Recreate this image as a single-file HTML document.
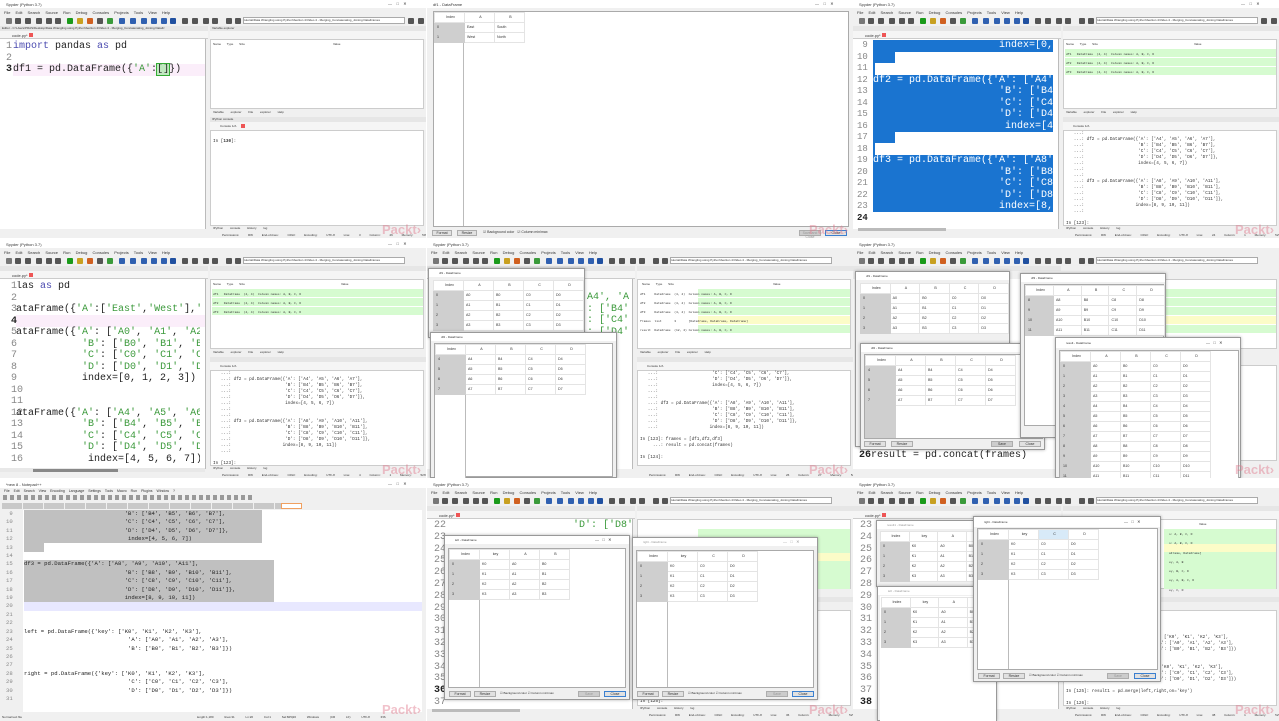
<!DOCTYPE html>
<html><head><meta charset="utf-8">
<style>
*{margin:0;padding:0;box-sizing:border-box}
body{width:1279px;height:721px;background:#fff;position:relative;overflow:hidden;font-family:"Liberation Sans",sans-serif}
.T{position:absolute;width:426px;height:238px;overflow:hidden;background:#f0f0f0}
.a{position:absolute}
.clip{overflow:hidden}
.s{font:4px/5px "Liberation Sans",sans-serif;color:#333;white-space:nowrap}
.c{font:10px/11.5px "Liberation Mono",monospace;white-space:pre;color:#222}
.k{color:#4b4bb0}.g{color:#3c9a3c}
.m{font:4.3px/6px "Liberation Mono",monospace;white-space:pre;color:#333}
.tt{left:0;top:0;width:426px;height:8px;background:#fff}
.mn{left:4px;top:10px;word-spacing:4px}
.tb{left:0;top:16px;width:426px;height:10px}
.ic{position:absolute;top:18px;width:6px;height:6px;background:#555;border-radius:1px}
.eh{left:0;top:26px;width:208px;height:5px;background:#e6e6e6}
.et{left:0;top:31px;width:208px;height:8px;background:#f5f5f5;border-bottom:1px solid #ccc}
.ed{left:0;top:39px;width:206px;height:190px;background:#fff;border-right:1px solid #bbb}
.vh0{left:210px;top:26px;width:216px;height:5px;background:#e6e6e6}
.vt{left:210px;top:31px;width:216px;height:8px;background:#f5f5f5}
.vp{left:210px;top:39px;width:214px;height:70px;background:#fff;border:1px solid #ccc}
.pt{left:210px;top:109px;width:216px;height:7px;background:#f0f0f0}
.ch{left:210px;top:117px;width:216px;height:5px;background:#e6e6e6}
.ct{left:210px;top:122px;width:216px;height:8px;background:#f5f5f5}
.cb{left:210px;top:130px;width:214px;height:96px;background:#fff;border:1px solid #ccc}
.bt{left:210px;top:226px;width:216px;height:6px;background:#f0f0f0}
.st{left:0;top:232px;width:426px;height:6px;background:#f0f0f0}
.gr{background:#d6fbd0}
.pk{position:absolute;left:382px;top:222px;font:bold 13px "Liberation Sans",sans-serif;color:rgba(225,120,140,.45)}
.w{position:absolute;background:#f0f0f0;border:1px solid #999;box-shadow:0 0 3px rgba(0,0,0,.3)}
.w .wt{position:absolute;left:0;top:0;right:0;height:8px;background:#fff}
.w .in{position:absolute;left:3px;top:10px;right:3px;bottom:10px;background:#fff;border:1px solid #aaa}
table{border-collapse:collapse}
td{font:3.6px/9px "Liberation Sans",sans-serif;color:#333;border:1px solid #e4e4e4;width:30px;height:9px;padding-left:2px}
td.i{background:#cfcfcf;border-color:#cfcfcf}
tr.h td{background:#fff;text-align:center;height:9px}
.btn{position:absolute;bottom:2px;height:6px;width:22px;background:#e1e1e1;border:1px solid #adadad;font:3.5px/4px "Liberation Sans";text-align:center;color:#333}
</style></head><body>

<!-- ============ TILE 1 ============ -->
<div class="T" style="left:0;top:0">
<div class="a tt"><span class="a s" style="left:6px;top:2px">Spyder (Python 3.7)</span><span class="a s" style="left:388px;top:1px">—&nbsp;&nbsp;&nbsp;&nbsp;□&nbsp;&nbsp;&nbsp;&nbsp;✕</span></div>
<div class="a s mn">File Edit Search Source Run Debug Consoles Projects Tools View Help</div>
<div class="a tb"></div>
<span class="ic" style="left:6px;background:#777"></span><span class="ic" style="left:15px"></span><span class="ic" style="left:25px"></span><span class="ic" style="left:36px"></span><span class="ic" style="left:46px"></span><span class="ic" style="left:55px"></span><span class="ic" style="left:67px;background:#1a9a1a"></span><span class="ic" style="left:77px;background:#c8a020"></span><span class="ic" style="left:87px;background:#d06020"></span><span class="ic" style="left:97px"></span><span class="ic" style="left:107px;background:#3a9a3a"></span><span class="ic" style="left:119px;background:#3060b0"></span><span class="ic" style="left:130px;background:#3060b0"></span><span class="ic" style="left:141px;background:#3060b0"></span><span class="ic" style="left:151px;background:#3060b0"></span><span class="ic" style="left:161px;background:#3060b0"></span><span class="ic" style="left:170px;background:#2050a0"></span><span class="ic" style="left:182px"></span><span class="ic" style="left:192px"></span><span class="ic" style="left:203px"></span><span class="ic" style="left:212px"></span><span class="ic" style="left:226px"></span><span class="ic" style="left:235px"></span>
<div class="a s" style="left:243px;top:17px;width:162px;height:7px;background:#fff;border:1px solid #aaa;font-size:3px;overflow:hidden">tutorial\Data Wrangling using Python\Section 4\Video 4 - Merging_Concatenating_Joining DataFrames</div>
<span class="ic" style="left:408px"></span><span class="ic" style="left:418px"></span>
<div class="a eh"><span class="a s" style="left:2px;top:0;font-size:3px">Editor - C:\Users\PRAS\Desktop\Data Wrangling using Python\Section 4\Video 4 - Merging_Concatenating_Joining DataFr</span></div>
<div class="a et"><span class="a s" style="left:12px;top:2px">code.py*</span><span class="a" style="left:29px;top:2px;width:4px;height:4px;background:#e55"></span></div>
<div class="a ed"></div>
<div class="a" style="left:13px;top:64px;width:192px;height:12px;background:#fbeefa"></div>
<div class="a c" style="left:6px;top:41px;color:#888">1
2
<b style="color:#222">3</b></div>
<div class="a c" style="left:13px;top:41px"><span class="k">import</span> pandas <span class="k">as</span> pd

df1 = pd.DataFrame({<span class="g">'A'</span>:<span style="background:#bfe8bf;outline:1px solid #3a3">[]</span>})</div>
<div class="a vh0"><span class="a s" style="left:2px;top:0;font-size:3px">Variable explorer</span></div>
<div class="a vt"></div>
<div class="a vp"><span class="a s" style="left:2px;top:2px;font-size:3px;word-spacing:5px">Name Type Size</span><span class="a s" style="left:122px;top:2px;font-size:3px">Value</span></div>
<div class="a pt"><span class="a s" style="left:3px;top:1px;font-size:3px;word-spacing:6px">Variable&nbsp;explorer File&nbsp;explorer Help</span></div>
<div class="a ch"><span class="a s" style="left:2px;top:0;font-size:3px">IPython console</span></div>
<div class="a ct"><span class="a s" style="left:10px;top:2px;font-size:3px">Console 1/A</span><span class="a" style="left:31px;top:2px;width:4px;height:4px;background:#e55"></span></div>
<div class="a cb"><div class="a m" style="left:2px;top:8px">In [<b>130</b>]:</div></div>
<div class="a bt"><span class="a s" style="left:3px;top:0;font-size:3px;word-spacing:6px">IPython&nbsp;console History&nbsp;log</span></div>
<div class="a st"><span class="a s" style="left:222px;top:1px;font-size:3px;word-spacing:8px">Permissions:&nbsp;RW End-of-lines:&nbsp;CRLF Encoding:&nbsp;UTF-8 Line:&nbsp;3 Column:&nbsp;26 Memory:&nbsp;50%</span></div>
<div class="pk">Packt›</div>
</div>

<!-- ============ TILE 2 (DataFrame window) ============ -->
<div class="T" style="left:427px;top:0;background:#f0f0f0">
<div class="a tt"><span class="a s" style="left:6px;top:2px">df1 - DataFrame</span><span class="a s" style="left:388px;top:1px">—&nbsp;&nbsp;&nbsp;&nbsp;□&nbsp;&nbsp;&nbsp;&nbsp;✕</span></div>
<div class="a" style="left:6px;top:11px;width:416px;height:216px;background:#fff;border:1px solid #aaa"></div>
<div class="a" style="left:7px;top:12px;width:30px;height:214px;border-right:1px solid #bbb"></div>
<table class="a" style="left:7px;top:12px">
<tr class="h"><td>Index</td><td>A</td><td>B</td></tr>
<tr><td class="i">0</td><td>East</td><td>South</td></tr>
<tr><td class="i">1</td><td>West</td><td>North</td></tr>
</table>
<div class="btn" style="left:5px;bottom:2px;width:20px">Format</div><div class="btn" style="left:30px;width:20px">Resize</div>
<span class="a s" style="left:56px;top:230px;font-size:3.5px">☑ Background color&nbsp;&nbsp;&nbsp;☑ Column min/max</span>
<div class="btn" style="left:372px;background:#ccc;color:#999">Save and Close</div><div class="btn" style="left:398px;border-color:#3b80d0">Close</div>
<div class="pk">Packt›</div>
</div>

<!-- ============ TILE 3 ============ -->
<div class="T" style="left:853px;top:0">
<div class="a tt"><span class="a s" style="left:6px;top:2px">Spyder (Python 3.7)</span><span class="a s" style="left:388px;top:1px">—&nbsp;&nbsp;&nbsp;&nbsp;□&nbsp;&nbsp;&nbsp;&nbsp;✕</span></div>
<div class="a s mn">File Edit Search Source Run Debug Consoles Projects Tools View Help</div>
<span class="ic" style="left:6px;background:#777"></span><span class="ic" style="left:15px"></span><span class="ic" style="left:25px"></span><span class="ic" style="left:36px"></span><span class="ic" style="left:46px"></span><span class="ic" style="left:55px"></span><span class="ic" style="left:67px;background:#1a9a1a"></span><span class="ic" style="left:77px;background:#c8a020"></span><span class="ic" style="left:87px;background:#d06020"></span><span class="ic" style="left:97px"></span><span class="ic" style="left:107px;background:#3a9a3a"></span><span class="ic" style="left:119px;background:#3060b0"></span><span class="ic" style="left:130px;background:#3060b0"></span><span class="ic" style="left:141px;background:#3060b0"></span><span class="ic" style="left:151px;background:#3060b0"></span><span class="ic" style="left:161px;background:#3060b0"></span><span class="ic" style="left:170px;background:#2050a0"></span><span class="ic" style="left:182px"></span><span class="ic" style="left:192px"></span><span class="ic" style="left:203px"></span><span class="ic" style="left:212px"></span><span class="ic" style="left:226px"></span><span class="ic" style="left:235px"></span>
<div class="a s" style="left:243px;top:17px;width:162px;height:7px;background:#fff;border:1px solid #aaa;font-size:3px;overflow:hidden">tutorial\Data Wrangling using Python\Section 4\Video 4 - Merging_Concatenating_Joining DataFrames</div>
<span class="ic" style="left:408px"></span><span class="ic" style="left:418px"></span>
<div class="a eh"></div>
<div class="a et"><span class="a s" style="left:12px;top:2px">code.py*</span><span class="a" style="left:29px;top:2px;width:4px;height:4px;background:#e55"></span></div>
<div class="a ed"></div>
<div class="a" style="left:20px;top:40px;width:180px;height:172px;background:#1a74d0"></div>
<div class="a" style="left:42px;top:52px;width:158px;height:11px;background:#fff"></div>
<div class="a" style="left:22px;top:63px;width:178px;height:12px;background:#fff"></div>
<div class="a" style="left:42px;top:132px;width:158px;height:11px;background:#fff"></div>
<div class="a" style="left:22px;top:143px;width:178px;height:12px;background:#fff"></div>
<div class="a c" style="left:4px;top:40px;color:#888;font-size:9px"> 9
10
11
12
13
14
15
16
17
18
19
20
21
22
23
<b style="color:#222">24</b></div>
<div class="a c clip" style="left:20px;top:40px;width:180px;height:175px;color:#fff">                     index=[0,


df2 = pd.DataFrame({'A': ['A4', 'A
                     'B': ['B4'
                     'C': ['C4'
                     'D': ['D4'
                      index=[4,


df3 = pd.DataFrame({'A': ['A8', 'A
                     'B': ['B8'
                     'C': ['C8'
                     'D': ['D8'
                     index=[8,</div>
<div class="a" style="left:5px;top:228px;width:88px;height:3px;background:#bbb"></div>
<div class="a vh0"></div><div class="a vt"></div>
<div class="a vp"><span class="a s" style="left:2px;top:2px;font-size:3px;word-spacing:5px">Name Type Size</span><span class="a s" style="left:130px;top:2px;font-size:3px">Value</span>
<div class="a gr" style="left:1px;top:9px;width:211px;height:8px"></div><div class="a gr" style="left:1px;top:18px;width:211px;height:8px"></div><div class="a gr" style="left:1px;top:27px;width:211px;height:8px"></div>
<div class="a m" style="left:2px;top:10px;font-size:3px;line-height:9px">df1   DataFrame  (4, 4)  Column names: A, B, C, D
df2   DataFrame  (4, 4)  Column names: A, B, C, D
df3   DataFrame  (4, 4)  Column names: A, B, C, D</div></div>
<div class="a pt"><span class="a s" style="left:3px;top:1px;font-size:3px;word-spacing:6px">Variable&nbsp;explorer File&nbsp;explorer Help</span></div>
<div class="a ch"></div><div class="a ct"><span class="a s" style="left:10px;top:2px;font-size:3px">Console 1/A</span></div>
<div class="a cb"><div class="a m" style="left:2px;top:0">   ...:
   ...: df2 = pd.DataFrame({'A': ['A4', 'A5', 'A6', 'A7'],
   ...:                     'B': ['B4', 'B5', 'B6', 'B7'],
   ...:                     'C': ['C4', 'C5', 'C6', 'C7'],
   ...:                     'D': ['D4', 'D5', 'D6', 'D7']},
   ...:                     index=[4, 5, 6, 7])
   ...:
   ...:
   ...: df3 = pd.DataFrame({'A': ['A8', 'A9', 'A10', 'A11'],
   ...:                     'B': ['B8', 'B9', 'B10', 'B11'],
   ...:                     'C': ['C8', 'C9', 'C10', 'C11'],
   ...:                     'D': ['D8', 'D9', 'D10', 'D11']},
   ...:                    index=[8, 9, 10, 11])
   ...:

In [123]:</div></div>
<div class="a bt"><span class="a s" style="left:3px;top:0;font-size:3px;word-spacing:6px">IPython&nbsp;console History&nbsp;log</span></div>
<div class="a st"><span class="a s" style="left:222px;top:1px;font-size:3px;word-spacing:8px">Permissions:&nbsp;RW End-of-lines:&nbsp;CRLF Encoding:&nbsp;UTF-8 Line:&nbsp;24 Column:&nbsp;1 Memory:&nbsp;52%</span></div>
<div class="pk">Packt›</div>
</div>

<!-- ============ TILE 4 ============ -->
<div class="T" style="left:0;top:240px">
<div class="a tt"><span class="a s" style="left:6px;top:2px">Spyder (Python 3.7)</span><span class="a s" style="left:388px;top:1px">—&nbsp;&nbsp;&nbsp;&nbsp;□&nbsp;&nbsp;&nbsp;&nbsp;✕</span></div>
<div class="a s mn">File Edit Search Source Run Debug Consoles Projects Tools View Help</div>
<span class="ic" style="left:6px;background:#777"></span><span class="ic" style="left:15px"></span><span class="ic" style="left:25px"></span><span class="ic" style="left:36px"></span><span class="ic" style="left:46px"></span><span class="ic" style="left:55px"></span><span class="ic" style="left:67px;background:#1a9a1a"></span><span class="ic" style="left:77px;background:#c8a020"></span><span class="ic" style="left:87px;background:#d06020"></span><span class="ic" style="left:97px"></span><span class="ic" style="left:107px;background:#3a9a3a"></span><span class="ic" style="left:119px;background:#3060b0"></span><span class="ic" style="left:130px;background:#3060b0"></span><span class="ic" style="left:141px;background:#3060b0"></span><span class="ic" style="left:151px;background:#3060b0"></span><span class="ic" style="left:161px;background:#3060b0"></span><span class="ic" style="left:170px;background:#2050a0"></span><span class="ic" style="left:182px"></span><span class="ic" style="left:192px"></span><span class="ic" style="left:203px"></span><span class="ic" style="left:212px"></span><span class="ic" style="left:226px"></span><span class="ic" style="left:235px"></span>
<div class="a s" style="left:243px;top:17px;width:162px;height:7px;background:#fff;border:1px solid #aaa;font-size:3px;overflow:hidden">tutorial\Data Wrangling using Python\Section 4\Video 4 - Merging_Concatenating_Joining DataFrames</div>
<div class="a eh"></div>
<div class="a et"><span class="a s" style="left:12px;top:2px">code.py*</span><span class="a" style="left:29px;top:2px;width:4px;height:4px;background:#e55"></span></div>
<div class="a ed"></div>
<div class="a" style="left:16px;top:75px;width:189px;height:12px;background:#fbeefa"></div>
<div class="a c" style="left:11px;top:41px;color:#888">1
2
3
<b style="color:#222">4</b>
5
6
7
8
9
10
11
12
13
14
15
16</div>
<div class="a c clip" style="left:16px;top:41px;width:184px;height:186px"><span>las <span class="k">as</span> pd</span>

ataFrame({<span class="g">'A'</span>:[<span class="g">'East'</span>,<span class="g">'West'</span>],<span class="g">'B'</span>:[

ataFrame({<span class="g">'A'</span>: [<span class="g">'A0'</span>, <span class="g">'A1'</span>, <span class="g">'A2'</span>, <span class="g">'</span>
           <span class="g">'B'</span>: [<span class="g">'B0'</span>, <span class="g">'B1'</span>, <span class="g">'B2</span>
           <span class="g">'C'</span>: [<span class="g">'C0'</span>, <span class="g">'C1'</span>, <span class="g">'C2</span>
           <span class="g">'D'</span>: [<span class="g">'D0'</span>, <span class="g">'D1'</span>, <span class="g">'D2</span>
           index=[0, 1, 2, 3])


ataFrame({<span class="g">'A'</span>: [<span class="g">'A4'</span>, <span class="g">'A5'</span>, <span class="g">'A6'</span>, <span class="g">'</span>
           <span class="g">'B'</span>: [<span class="g">'B4'</span>, <span class="g">'B5'</span>, <span class="g">'B6</span>
           <span class="g">'C'</span>: [<span class="g">'C4'</span>, <span class="g">'C5'</span>, <span class="g">'C6</span>
           <span class="g">'D'</span>: [<span class="g">'D4'</span>, <span class="g">'D5'</span>, <span class="g">'D6</span>
            index=[4, 5, 6, 7])</div>
<div class="a" style="left:0;top:228px;width:205px;height:4px;background:#e8e8e8"></div>
<div class="a" style="left:33px;top:229px;width:85px;height:3px;background:#888"></div>
<div class="a vh0"></div><div class="a vt"></div>
<div class="a vp"><span class="a s" style="left:2px;top:2px;font-size:3px;word-spacing:5px">Name Type Size</span><span class="a s" style="left:130px;top:2px;font-size:3px">Value</span>
<div class="a gr" style="left:1px;top:9px;width:211px;height:8px"></div><div class="a gr" style="left:1px;top:18px;width:211px;height:8px"></div><div class="a gr" style="left:1px;top:27px;width:211px;height:8px"></div>
<div class="a m" style="left:2px;top:10px;font-size:3px;line-height:9px">df1   DataFrame  (4, 4)  Column names: A, B, C, D
df2   DataFrame  (4, 4)  Column names: A, B, C, D
df3   DataFrame  (4, 4)  Column names: A, B, C, D</div></div>
<div class="a pt"><span class="a s" style="left:3px;top:1px;font-size:3px;word-spacing:6px">Variable&nbsp;explorer File&nbsp;explorer Help</span></div>
<div class="a ch"></div><div class="a ct"><span class="a s" style="left:10px;top:2px;font-size:3px">Console 1/A</span></div>
<div class="a cb"><div class="a m" style="left:2px;top:0">   ...:
   ...: df2 = pd.DataFrame({'A': ['A4', 'A5', 'A6', 'A7'],
   ...:                     'B': ['B4', 'B5', 'B6', 'B7'],
   ...:                     'C': ['C4', 'C5', 'C6', 'C7'],
   ...:                     'D': ['D4', 'D5', 'D6', 'D7']},
   ...:                     index=[4, 5, 6, 7])
   ...:
   ...:
   ...: df3 = pd.DataFrame({'A': ['A8', 'A9', 'A10', 'A11'],
   ...:                     'B': ['B8', 'B9', 'B10', 'B11'],
   ...:                     'C': ['C8', 'C9', 'C10', 'C11'],
   ...:                     'D': ['D8', 'D9', 'D10', 'D11']},
   ...:                    index=[8, 9, 10, 11])
   ...:

In [123]:</div></div>
<div class="a bt"><span class="a s" style="left:3px;top:0;font-size:3px;word-spacing:6px">IPython&nbsp;console History&nbsp;log</span></div>
<div class="a st"><span class="a s" style="left:222px;top:1px;font-size:3px;word-spacing:8px">Permissions:&nbsp;RW End-of-lines:&nbsp;CRLF Encoding:&nbsp;UTF-8 Line:&nbsp;4 Column:&nbsp;1 Memory:&nbsp;52%</span></div>
<div class="pk">Packt›</div>
</div>

<!-- ============ TILE 5 ============ -->
<div class="T" style="left:427px;top:240px">
<div class="a tt"><span class="a s" style="left:6px;top:2px">Spyder (Python 3.7)</span></div>
<div class="a s mn">File Edit Search Source Run Debug Consoles Projects Tools View Help</div>
<span class="ic" style="left:6px;background:#777"></span><span class="ic" style="left:15px"></span><span class="ic" style="left:25px"></span><span class="ic" style="left:36px"></span><span class="ic" style="left:46px"></span><span class="ic" style="left:55px"></span><span class="ic" style="left:67px;background:#1a9a1a"></span><span class="ic" style="left:77px;background:#c8a020"></span><span class="ic" style="left:87px;background:#d06020"></span><span class="ic" style="left:97px"></span><span class="ic" style="left:107px;background:#3a9a3a"></span><span class="ic" style="left:119px;background:#3060b0"></span><span class="ic" style="left:130px;background:#3060b0"></span><span class="ic" style="left:141px;background:#3060b0"></span><span class="ic" style="left:151px;background:#3060b0"></span><span class="ic" style="left:161px;background:#3060b0"></span><span class="ic" style="left:170px;background:#2050a0"></span><span class="ic" style="left:182px"></span><span class="ic" style="left:192px"></span><span class="ic" style="left:203px"></span><span class="ic" style="left:212px"></span><span class="ic" style="left:226px"></span><span class="ic" style="left:235px"></span>
<div class="a s" style="left:243px;top:17px;width:162px;height:7px;background:#fff;border:1px solid #aaa;font-size:3px;overflow:hidden">tutorial\Data Wrangling using Python\Section 4\Video 4 - Merging_Concatenating_Joining DataFrames</div>
<div class="a eh"></div><div class="a et"></div><div class="a ed"></div>
<div class="a c g clip" style="left:160px;top:52px;width:42px;height:120px">A4', 'A
: ['B4'
: ['C4'
: ['D4'
4,

 'A
B'
B'
B'</div>
<div class="a vh0"></div><div class="a vt"></div>
<div class="a vp"><span class="a s" style="left:4px;top:2px;font-size:3px;word-spacing:5px">Name Type Size</span><span class="a s" style="left:135px;top:2px;font-size:3px">Value</span>
<div class="a gr" style="left:60px;top:9px;width:152px;height:8px"></div><div class="a gr" style="left:60px;top:18px;width:152px;height:8px"></div><div class="a gr" style="left:60px;top:27px;width:152px;height:8px"></div><div class="a" style="left:60px;top:36px;width:152px;height:8px;background:#fcfcc8"></div><div class="a gr" style="left:60px;top:45px;width:152px;height:8px"></div>
<div class="a m" style="left:2px;top:10px;font-size:3px;line-height:9px">df1     DataFrame  (4, 4)  Column names: A, B, C, D
df2     DataFrame  (4, 4)  Column names: A, B, C, D
df3     DataFrame  (4, 4)  Column names: A, B, C, D
frames  list       3       [DataFrame, DataFrame, DataFrame]
result  DataFrame  (12, 4) Column names: A, B, C, D</div></div>
<div class="a pt"><span class="a s" style="left:3px;top:1px;font-size:3px;word-spacing:6px">Variable&nbsp;explorer File&nbsp;explorer Help</span></div>
<div class="a ch"></div><div class="a ct"><span class="a s" style="left:10px;top:2px;font-size:3px">Console 1/A</span></div>
<div class="a cb"><div class="a m" style="left:2px;top:0">   ...:                     'C': ['C4', 'C5', 'C6', 'C7'],
   ...:                     'D': ['D4', 'D5', 'D6', 'D7']},
   ...:                     index=[4, 5, 6, 7])
   ...:
   ...:
   ...: df3 = pd.DataFrame({'A': ['A8', 'A9', 'A10', 'A11'],
   ...:                     'B': ['B8', 'B9', 'B10', 'B11'],
   ...:                     'C': ['C8', 'C9', 'C10', 'C11'],
   ...:                     'D': ['D8', 'D9', 'D10', 'D11']},
   ...:                    index=[8, 9, 10, 11])

In [123]: frames = [df1,df2,df3]
     ...: result = pd.concat(frames)

In [124]:</div></div>
<div class="a bt"></div>
<div class="a st"><span class="a s" style="left:222px;top:1px;font-size:3px;word-spacing:8px">Permissions:&nbsp;RW End-of-lines:&nbsp;CRLF Encoding:&nbsp;UTF-8 Line:&nbsp;26 Column:&nbsp;27 Memory:&nbsp;52%</span></div>
<div class="w" style="left:1px;top:28px;width:157px;height:70px"><div class="wt"><span class="a s" style="left:10px;top:2px;font-size:3px">df1 - DataFrame</span></div>
<table class="a" style="left:4px;top:11px;background:#fff"><tr class="h"><td>Index</td><td>A</td><td>B</td><td>C</td><td>D</td></tr><tr><td class="i">0</td><td>A0</td><td>B0</td><td>C0</td><td>D0</td></tr><tr><td class="i">1</td><td>A1</td><td>B1</td><td>C1</td><td>D1</td></tr><tr><td class="i">2</td><td>A2</td><td>B2</td><td>C2</td><td>D2</td></tr><tr><td class="i">3</td><td>A3</td><td>B3</td><td>C3</td><td>D3</td></tr></table></div>
<div class="w" style="left:3px;top:92px;width:187px;height:146px"><div class="wt"><span class="a s" style="left:10px;top:2px;font-size:3px">df2 - DataFrame</span></div>
<div class="in" style="bottom:0"></div>
<div class="a" style="left:4px;top:11px;width:31px;height:135px;border-right:1px solid #bbb;background:#fff"></div>
<table class="a" style="left:4px;top:11px;background:#fff"><tr class="h"><td>Index</td><td>A</td><td>B</td><td>C</td><td>D</td></tr><tr><td class="i">4</td><td>A4</td><td>B4</td><td>C4</td><td>D4</td></tr><tr><td class="i">5</td><td>A5</td><td>B5</td><td>C5</td><td>D5</td></tr><tr><td class="i">6</td><td>A6</td><td>B6</td><td>C6</td><td>D6</td></tr><tr><td class="i">7</td><td>A7</td><td>B7</td><td>C7</td><td>D7</td></tr></table></div>
<div class="pk">Packt›</div>
</div>

<!-- ============ TILE 6 ============ -->
<div class="T" style="left:853px;top:240px">
<div class="a tt"><span class="a s" style="left:6px;top:2px">Spyder (Python 3.7)</span></div>
<div class="a s mn">File Edit Search Source Run Debug Consoles Projects Tools View Help</div>
<span class="ic" style="left:6px;background:#777"></span><span class="ic" style="left:15px"></span><span class="ic" style="left:25px"></span><span class="ic" style="left:36px"></span><span class="ic" style="left:46px"></span><span class="ic" style="left:55px"></span><span class="ic" style="left:67px;background:#1a9a1a"></span><span class="ic" style="left:77px;background:#c8a020"></span><span class="ic" style="left:87px;background:#d06020"></span><span class="ic" style="left:97px"></span><span class="ic" style="left:107px;background:#3a9a3a"></span><span class="ic" style="left:119px;background:#3060b0"></span><span class="ic" style="left:130px;background:#3060b0"></span><span class="ic" style="left:141px;background:#3060b0"></span><span class="ic" style="left:151px;background:#3060b0"></span><span class="ic" style="left:161px;background:#3060b0"></span><span class="ic" style="left:170px;background:#2050a0"></span><span class="ic" style="left:182px"></span><span class="ic" style="left:192px"></span><span class="ic" style="left:203px"></span><span class="ic" style="left:212px"></span><span class="ic" style="left:226px"></span><span class="ic" style="left:235px"></span>
<div class="a s" style="left:243px;top:17px;width:162px;height:7px;background:#fff;border:1px solid #aaa;font-size:3px;overflow:hidden">tutorial\Data Wrangling using Python\Section 4\Video 4 - Merging_Concatenating_Joining DataFrames</div>
<div class="a eh"></div><div class="a ed"></div>
<div class="a c" style="left:6px;top:210px"><b>26</b>result = pd.concat(frames)</div>
<div class="a vp" style="top:39px;height:70px"><div class="a gr" style="left:100px;top:9px;width:112px;height:8px"></div><div class="a gr" style="left:100px;top:18px;width:112px;height:8px"></div><div class="a gr" style="left:100px;top:27px;width:112px;height:8px"></div><div class="a" style="left:100px;top:36px;width:112px;height:8px;background:#fcfcc8"></div><div class="a gr" style="left:100px;top:45px;width:112px;height:8px"></div></div>
<div class="a cb" style="top:125px"></div>
<div class="w" style="left:2px;top:31px;width:155px;height:176px"><div class="wt"><span class="a s" style="left:10px;top:2px;font-size:3px">df1 - DataFrame</span></div>
<table class="a" style="left:4px;top:11px;background:#fff"><tr class="h"><td>Index</td><td>A</td><td>B</td><td>C</td><td>D</td></tr><tr><td class="i">0</td><td>A0</td><td>B0</td><td>C0</td><td>D0</td></tr><tr><td class="i">1</td><td>A1</td><td>B1</td><td>C1</td><td>D1</td></tr><tr><td class="i">2</td><td>A2</td><td>B2</td><td>C2</td><td>D2</td></tr><tr><td class="i">3</td><td>A3</td><td>B3</td><td>C3</td><td>D3</td></tr></table></div>
<div class="w" style="left:7px;top:103px;width:185px;height:107px"><div class="wt"><span class="a s" style="left:10px;top:2px;font-size:3px">df2 - DataFrame</span></div>
<div class="a" style="left:3px;top:10px;width:179px;height:85px;background:#fff;border:1px solid #aaa"></div>
<div class="a" style="left:4px;top:11px;width:31px;height:83px;background:#cfcfcf"></div>
<table class="a" style="left:4px;top:11px;background:#fff"><tr class="h"><td>Index</td><td>A</td><td>B</td><td>C</td><td>D</td></tr><tr><td class="i">4</td><td>A4</td><td>B4</td><td>C4</td><td>D4</td></tr><tr><td class="i">5</td><td>A5</td><td>B5</td><td>C5</td><td>D5</td></tr><tr><td class="i">6</td><td>A6</td><td>B6</td><td>C6</td><td>D6</td></tr><tr><td class="i">7</td><td>A7</td><td>B7</td><td>C7</td><td>D7</td></tr></table>
<div class="btn" style="left:3px">Format</div><div class="btn" style="left:30px">Resize</div><div class="btn" style="left:130px;background:#ccc">Save</div><div class="btn" style="left:158px">Close</div></div>
<div class="w" style="left:167px;top:33px;width:146px;height:165px"><div class="wt"><span class="a s" style="left:10px;top:2px;font-size:3px">df3 - DataFrame</span></div>
<div class="a" style="left:3px;top:10px;width:140px;height:142px;background:#fff;border:1px solid #aaa"></div>
<table class="a" style="left:4px;top:11px;background:#fff"><tr class="h"><td>Index</td><td>A</td><td>B</td><td>C</td><td>D</td></tr><tr><td class="i">8</td><td>A8</td><td>B8</td><td>C8</td><td>D8</td></tr><tr><td class="i">9</td><td>A9</td><td>B9</td><td>C9</td><td>D9</td></tr><tr><td class="i">10</td><td>A10</td><td>B10</td><td>C10</td><td>D10</td></tr><tr><td class="i">11</td><td>A11</td><td>B11</td><td>C11</td><td>D11</td></tr></table></div>
<div class="w" style="left:202px;top:97px;width:186px;height:141px"><div class="wt" style="height:10px"><span class="a s" style="left:10px;top:3px;font-size:3px">result - DataFrame</span><span class="a s" style="left:150px;top:2px">—&nbsp;&nbsp;&nbsp;□&nbsp;&nbsp;&nbsp;✕</span></div>
<div class="a" style="left:3px;top:12px;width:180px;height:129px;background:#fff;border:1px solid #aaa"></div>
<table class="a" style="left:4px;top:13px;background:#fff"><tr class="h"><td>Index</td><td>A</td><td>B</td><td>C</td><td>D</td></tr><tr><td class="i">0</td><td>A0</td><td>B0</td><td>C0</td><td>D0</td></tr><tr><td class="i">1</td><td>A1</td><td>B1</td><td>C1</td><td>D1</td></tr><tr><td class="i">2</td><td>A2</td><td>B2</td><td>C2</td><td>D2</td></tr><tr><td class="i">3</td><td>A3</td><td>B3</td><td>C3</td><td>D3</td></tr><tr><td class="i">4</td><td>A4</td><td>B4</td><td>C4</td><td>D4</td></tr><tr><td class="i">5</td><td>A5</td><td>B5</td><td>C5</td><td>D5</td></tr><tr><td class="i">6</td><td>A6</td><td>B6</td><td>C6</td><td>D6</td></tr><tr><td class="i">7</td><td>A7</td><td>B7</td><td>C7</td><td>D7</td></tr><tr><td class="i">8</td><td>A8</td><td>B8</td><td>C8</td><td>D8</td></tr><tr><td class="i">9</td><td>A9</td><td>B9</td><td>C9</td><td>D9</td></tr><tr><td class="i">10</td><td>A10</td><td>B10</td><td>C10</td><td>D10</td></tr><tr><td class="i">11</td><td>A11</td><td>B11</td><td>C11</td><td>D11</td></tr></table></div>
<div class="pk">Packt›</div>
</div>

<!-- ============ TILE 7 (Notepad++) ============ -->
<div class="T" style="left:0;top:480px;height:241px">
<div class="a tt"><span class="a s" style="left:6px;top:2px">*new 8 - Notepad++</span><span class="a s" style="left:388px;top:1px">—&nbsp;&nbsp;&nbsp;&nbsp;□&nbsp;&nbsp;&nbsp;&nbsp;✕</span></div>
<div class="a s" style="left:4px;top:9px;word-spacing:3px;font-size:3.5px">File Edit Search View Encoding Language Settings Tools Macro Run Plugins Window ?</div>
<div class="a" style="left:3px;top:15px;width:250px;height:5px;background:repeating-linear-gradient(90deg,#999 0 4px,transparent 4px 7px)"></div>
<div class="a" style="left:2px;top:23px;width:300px;height:6px;background:repeating-linear-gradient(90deg,#c8c8c8 0 20px,#f0f0f0 20px 21px)"></div>
<div class="a" style="left:281px;top:23px;width:21px;height:6px;background:#fff;border:1px solid #f0a060"></div>
<div class="a" style="left:0;top:30px;width:422px;height:202px;background:#fff"></div>
<div class="a" style="left:0;top:30px;width:23px;height:202px;background:#f0f0f0"></div>
<div class="a" style="left:24px;top:30px;width:238px;height:33px;background:#c0c0c0"></div>
<div class="a" style="left:24px;top:63px;width:20px;height:9px;background:#c0c0c0"></div>
<div class="a" style="left:24px;top:80px;width:250px;height:42px;background:#c0c0c0"></div>
<div class="a" style="left:24px;top:122px;width:398px;height:9px;background:#e8e8ff"></div>
<div class="a" style="font:5.6px/8.4px 'Liberation Mono',monospace;white-space:pre;left:6px;top:30px;color:#888"> 9
10
11
12
13
14
15
16
17
18
19
20
21
22
23
24
25
26
27
28
29
30
31</div>
<div class="a" style="font:5.6px/8.4px 'Liberation Mono',monospace;white-space:pre;left:24px;top:30px;color:#222">                              'B': ['B4', 'B5', 'B6', 'B7'],
                              'C': ['C4', 'C5', 'C6', 'C7'],
                              'D': ['D4', 'D5', 'D6', 'D7']},
                               index=[4, 5, 6, 7])


df3 = pd.DataFrame({'A': ['A8', 'A9', 'A10', 'A11'],
                              'B': ['B8', 'B9', 'B10', 'B11'],
                              'C': ['C8', 'C9', 'C10', 'C11'],
                              'D': ['D8', 'D9', 'D10', 'D11']},
                              index=[8, 9, 10, 11])



left = pd.DataFrame({'key': ['K0', 'K1', 'K2', 'K3'],
                               'A': ['A0', 'A1', 'A2', 'A3'],
                               'B': ['B0', 'B1', 'B2', 'B3']})


right = pd.DataFrame({'key': ['K0', 'K1', 'K2', 'K3'],
                               'C': ['C0', 'C1', 'C2', 'C3'],
                               'D': ['D0', 'D1', 'D2', 'D3']})
</div>
<div class="a" style="left:0;top:233px;width:426px;height:8px;background:#f0f0f0"><span class="a s" style="left:2px;top:2px;font-size:3px">Normal text file</span><span class="a s" style="left:197px;top:2px;font-size:3px;word-spacing:10px">length:1,180&nbsp;lines:31 Ln:20&nbsp;Col:1&nbsp;Sel:825|20 Windows&nbsp;(CR&nbsp;LF) UTF-8 INS</span></div>
<div class="pk">Packt›</div>
</div>

<!-- ============ TILE 8 ============ -->
<div class="T" style="left:427px;top:480px;height:241px">
<div class="a tt"><span class="a s" style="left:6px;top:2px">Spyder (Python 3.7)</span></div>
<div class="a s mn">File Edit Search Source Run Debug Consoles Projects Tools View Help</div>
<span class="ic" style="left:6px;background:#777"></span><span class="ic" style="left:15px"></span><span class="ic" style="left:25px"></span><span class="ic" style="left:36px"></span><span class="ic" style="left:46px"></span><span class="ic" style="left:55px"></span><span class="ic" style="left:67px;background:#1a9a1a"></span><span class="ic" style="left:77px;background:#c8a020"></span><span class="ic" style="left:87px;background:#d06020"></span><span class="ic" style="left:97px"></span><span class="ic" style="left:107px;background:#3a9a3a"></span><span class="ic" style="left:119px;background:#3060b0"></span><span class="ic" style="left:130px;background:#3060b0"></span><span class="ic" style="left:141px;background:#3060b0"></span><span class="ic" style="left:151px;background:#3060b0"></span><span class="ic" style="left:161px;background:#3060b0"></span><span class="ic" style="left:170px;background:#2050a0"></span><span class="ic" style="left:182px"></span><span class="ic" style="left:192px"></span><span class="ic" style="left:203px"></span><span class="ic" style="left:212px"></span><span class="ic" style="left:226px"></span><span class="ic" style="left:235px"></span>
<div class="a s" style="left:243px;top:17px;width:162px;height:7px;background:#fff;border:1px solid #aaa;font-size:3px;overflow:hidden">tutorial\Data Wrangling using Python\Section 4\Video 4 - Merging_Concatenating_Joining DataFrames</div>
<div class="a eh"></div>
<div class="a et"><span class="a s" style="left:12px;top:2px">code.py*</span><span class="a" style="left:29px;top:2px;width:4px;height:4px;background:#e55"></span></div>
<div class="a ed"></div>
<div class="a c" style="left:7px;top:40px;color:#888;line-height:11.8px">22
23
24
25
26
27
28
29
30
31
32
33
34
35
<b style="color:#222">36</b>
37</div>
<div class="a c g" style="left:146px;top:40px">'D': ['D8'</div>
<div class="a" style="left:5px;top:229px;width:88px;height:3px;background:#bbb"></div>
<div class="a vh0"></div><div class="a vt"></div>
<div class="a vp"><div class="a gr" style="left:60px;top:9px;width:152px;height:60px"></div><div class="a" style="left:60px;top:33px;width:152px;height:8px;background:#fcfcc8"></div></div>
<div class="a ch"></div>
<div class="a cb"><div class="a m" style="left:2px;top:88px">In [125]:</div></div>
<div class="a bt"><span class="a s" style="left:3px;top:0;font-size:3px;word-spacing:6px">IPython&nbsp;console History&nbsp;log</span></div>
<div class="a st"><span class="a s" style="left:222px;top:1px;font-size:3px;word-spacing:8px">Permissions:&nbsp;RW End-of-lines:&nbsp;CRLF Encoding:&nbsp;UTF-8 Line:&nbsp;36 Column:&nbsp;1 Memory:&nbsp;52%</span></div>
<div class="w" style="left:17px;top:55px;width:186px;height:165px"><div class="wt"><span class="a s" style="left:10px;top:2px;font-size:3px">left - DataFrame</span><span class="a s" style="left:150px;top:1px">—&nbsp;&nbsp;&nbsp;□&nbsp;&nbsp;&nbsp;✕</span></div>
<div class="a" style="left:3px;top:12px;width:178px;height:140px;background:#fff;border:1px solid #aaa"></div>
<div class="a" style="left:4px;top:13px;width:31px;height:138px;border-right:1px solid #bbb"></div>
<table class="a" style="left:4px;top:13px;background:#fff"><tr class="h"><td>Index</td><td>key</td><td>A</td><td>B</td></tr><tr><td class="i">0</td><td>K0</td><td>A0</td><td>B0</td></tr><tr><td class="i">1</td><td>K1</td><td>A1</td><td>B1</td></tr><tr><td class="i">2</td><td>K2</td><td>A2</td><td>B2</td></tr><tr><td class="i">3</td><td>K3</td><td>A3</td><td>B3</td></tr></table>
<div class="btn" style="left:4px">Format</div><div class="btn" style="left:29px">Resize</div><span class="a s" style="left:55px;bottom:3px;font-size:3px">☑ Background color ☑ Column min/max</span><div class="btn" style="left:133px;background:#ccc;color:#999">Save</div><div class="btn" style="left:159px;border-color:#3b80d0">Close</div></div>
<div class="w" style="left:205px;top:57px;width:186px;height:163px"><div class="wt"><span class="a s" style="left:10px;top:2px;font-size:3px;color:#999">right - DataFrame</span><span class="a s" style="left:150px;top:1px;color:#999">—&nbsp;&nbsp;&nbsp;□&nbsp;&nbsp;&nbsp;✕</span></div>
<div class="a" style="left:3px;top:12px;width:178px;height:138px;background:#fff;border:1px solid #aaa"></div>
<div class="a" style="left:4px;top:13px;width:31px;height:136px;border-right:1px solid #bbb"></div>
<table class="a" style="left:4px;top:13px;background:#fff"><tr class="h"><td>Index</td><td>key</td><td>C</td><td>D</td></tr><tr><td class="i">0</td><td>K0</td><td>C0</td><td>D0</td></tr><tr><td class="i">1</td><td>K1</td><td>C1</td><td>D1</td></tr><tr><td class="i">2</td><td>K2</td><td>C2</td><td>D2</td></tr><tr><td class="i">3</td><td>K3</td><td>C3</td><td>D3</td></tr></table>
<div class="btn" style="left:4px">Format</div><div class="btn" style="left:29px">Resize</div><span class="a s" style="left:55px;bottom:3px;font-size:3px">☑ Background color ☑ Column min/max</span><div class="btn" style="left:133px;background:#ccc;color:#999">Save</div><div class="btn" style="left:159px;border-color:#3b80d0">Close</div></div>
<div class="pk">Packt›</div>
</div>

<!-- ============ TILE 9 ============ -->
<div class="T" style="left:853px;top:480px;height:241px">
<div class="a tt"><span class="a s" style="left:6px;top:2px">Spyder (Python 3.7)</span></div>
<div class="a s mn">File Edit Search Source Run Debug Consoles Projects Tools View Help</div>
<span class="ic" style="left:6px;background:#777"></span><span class="ic" style="left:15px"></span><span class="ic" style="left:25px"></span><span class="ic" style="left:36px"></span><span class="ic" style="left:46px"></span><span class="ic" style="left:55px"></span><span class="ic" style="left:67px;background:#1a9a1a"></span><span class="ic" style="left:77px;background:#c8a020"></span><span class="ic" style="left:87px;background:#d06020"></span><span class="ic" style="left:97px"></span><span class="ic" style="left:107px;background:#3a9a3a"></span><span class="ic" style="left:119px;background:#3060b0"></span><span class="ic" style="left:130px;background:#3060b0"></span><span class="ic" style="left:141px;background:#3060b0"></span><span class="ic" style="left:151px;background:#3060b0"></span><span class="ic" style="left:161px;background:#3060b0"></span><span class="ic" style="left:170px;background:#2050a0"></span><span class="ic" style="left:182px"></span><span class="ic" style="left:192px"></span><span class="ic" style="left:203px"></span><span class="ic" style="left:212px"></span><span class="ic" style="left:226px"></span><span class="ic" style="left:235px"></span>
<div class="a s" style="left:243px;top:17px;width:162px;height:7px;background:#fff;border:1px solid #aaa;font-size:3px;overflow:hidden">tutorial\Data Wrangling using Python\Section 4\Video 4 - Merging_Concatenating_Joining DataFrames</div>
<div class="a eh"></div>
<div class="a et"><span class="a s" style="left:12px;top:2px">code.py*</span><span class="a" style="left:29px;top:2px;width:4px;height:4px;background:#e55"></span></div>
<div class="a ed"></div>
<div class="a c" style="left:7px;top:40px;color:#888;line-height:11.8px">23
24
25
26
27
28
29
30
31
32
33
34
35
36
37
<b style="color:#222">38</b></div>
<div class="a vh0"></div><div class="a vt"></div>
<div class="a vp"><span class="a s" style="left:135px;top:2px;font-size:3px">Value</span><div class="a gr" style="left:100px;top:9px;width:112px;height:60px"></div><div class="a" style="left:100px;top:24px;width:112px;height:8px;background:#fcfcc8"></div>
<div class="a m" style="left:105px;top:10px;font-size:3px;line-height:9.3px">s: A, B, C, D
s: A, B, C, D
aFrame, DataFrame]
ey, A, B
ey, B, C, D
ey, A, B, C, D
ey, C, D</div></div>
<div class="a ch"></div>
<div class="a cb"><div class="a m" style="left:2px;top:0">



                                  ' : ['K0', 'K1', 'K2', 'K3'],
                                   'A': ['A0', 'A1', 'A2', 'A3'],
                                   'B': ['B0', 'B1', 'B2', 'B3']})


                                  : ['K0', 'K1', 'K2', 'K3'],
                                   'C': ['C0', 'C1', 'C2', 'C3'],
                                   'D': ['D0', 'D1', 'D2', 'D3']})

In [125]: result1 = pd.merge(left,right,on='key')

In [126]:</div></div>
<div class="a bt"><span class="a s" style="left:3px;top:0;font-size:3px;word-spacing:6px">IPython&nbsp;console History&nbsp;log</span></div>
<div class="a st"><span class="a s" style="left:222px;top:1px;font-size:3px;word-spacing:8px">Permissions:&nbsp;RW End-of-lines:&nbsp;CRLF Encoding:&nbsp;UTF-8 Line:&nbsp;38 Column:&nbsp;1 Memory:&nbsp;52%</span></div>
<div class="w" style="left:23px;top:40px;width:120px;height:67px"><div class="wt"><span class="a s" style="left:10px;top:2px;font-size:3px;color:#999">result1 - DataFrame</span></div>
<table class="a" style="left:3px;top:10px;background:#fff"><tr class="h"><td>Index</td><td>key</td><td>A</td><td>B</td></tr><tr><td class="i">0</td><td>K0</td><td>A0</td><td>B0</td></tr><tr><td class="i">1</td><td>K1</td><td>A1</td><td>B1</td></tr><tr><td class="i">2</td><td>K2</td><td>A2</td><td>B2</td></tr><tr><td class="i">3</td><td>K3</td><td>A3</td><td>B3</td></tr></table></div>
<div class="w" style="left:24px;top:106px;width:120px;height:135px"><div class="wt"><span class="a s" style="left:10px;top:2px;font-size:3px;color:#999">left - DataFrame</span></div>
<div class="a" style="left:2px;top:9px;width:116px;height:126px;background:#fff"></div>
<table class="a" style="left:3px;top:10px;background:#fff"><tr class="h"><td>Index</td><td>key</td><td>A</td><td>B</td></tr><tr><td class="i">0</td><td>K0</td><td>A0</td><td>B0</td></tr><tr><td class="i">1</td><td>K1</td><td>A1</td><td>B1</td></tr><tr><td class="i">2</td><td>K2</td><td>A2</td><td>B2</td></tr><tr><td class="i">3</td><td>K3</td><td>A3</td><td>B3</td></tr></table></div>
<div class="w" style="left:120px;top:36px;width:188px;height:166px"><div class="wt" style="height:10px"><span class="a s" style="left:10px;top:3px;font-size:3px">right - DataFrame</span><span class="a s" style="left:150px;top:2px">—&nbsp;&nbsp;&nbsp;□&nbsp;&nbsp;&nbsp;✕</span></div>
<div class="a" style="left:3px;top:11px;width:181px;height:142px;background:#fff;border:1px solid #aaa"></div>
<div class="a" style="left:4px;top:12px;width:31px;height:140px;border-right:1px solid #bbb"></div>
<table class="a" style="left:4px;top:12px;background:#fff"><tr class="h"><td>Index</td><td>key</td><td style="background:#d8eaf8">C</td><td>D</td></tr><tr><td class="i">0</td><td>K0</td><td>C0</td><td>D0</td></tr><tr><td class="i">1</td><td>K1</td><td>C1</td><td>D1</td></tr><tr><td class="i">2</td><td>K2</td><td>C2</td><td>D2</td></tr><tr><td class="i">3</td><td>K3</td><td>C3</td><td>D3</td></tr></table>
<div class="btn" style="left:4px">Format</div><div class="btn" style="left:29px">Resize</div><span class="a s" style="left:55px;bottom:3px;font-size:3px">☑ Background color ☑ Column min/max</span><div class="btn" style="left:133px;background:#ccc;color:#999">Save</div><div class="btn" style="left:160px;border-color:#3b80d0">Close</div></div>
<div class="pk">Packt›</div>
</div>

</body></html>
